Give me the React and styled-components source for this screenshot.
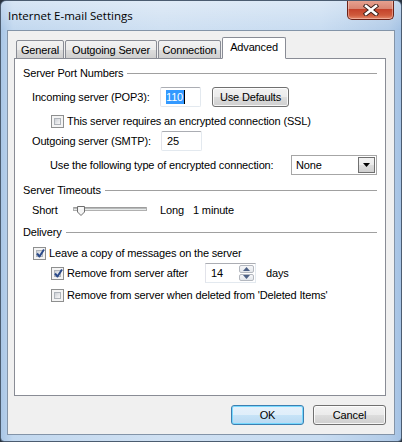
import React from 'react'
import styled, { createGlobalStyle } from 'styled-components'

const Global = createGlobalStyle`
  html, body { margin: 0; padding: 0; background: #2a3440; }
  body { font-family: Tahoma, "Liberation Sans", Arial, sans-serif; font-size: 11px; letter-spacing: -0.15px; color: #000; }
  * { box-sizing: border-box; }
`

const Window = styled.div`
  width: 402px;
  height: 442px;
  display: flex;
  flex-direction: column;
  border: 1px solid #4b5c70;
  border-radius: 6px 6px 4px 4px;
  background: linear-gradient(90deg, #a9c6e6 0%, #c2d8ef 3%, #cfe0f2 40%, #c8dcf1 80%, #b3cce8 97%, #a4c2e4 100%);
  overflow: hidden;
`

const TitleBar = styled.div`
  height: 29px;
  display: flex;
  align-items: flex-start;
  padding-left: 7px;
  background: linear-gradient(180deg, rgba(255,255,255,0.35) 0%, rgba(255,255,255,0) 100%);
`

const Title = styled.span`
  margin-top: 7px;
  font-family: "Open Sans", "Noto Sans", sans-serif;
  font-size: 11.5px;
  letter-spacing: 0;
  color: #000;
`

const CloseBtn = styled.div`
  margin-left: auto;
  margin-right: 7px;
  margin-top: -1px;
  width: 47px;
  height: 20px;
  display: flex;
  align-items: center;
  justify-content: center;
  border: 1px solid #6b2217;
  border-top: none;
  border-radius: 0 0 5px 5px;
  background: linear-gradient(180deg, #e8a493 0%, #d98673 45%, #c5432b 50%, #cf5a3c 80%, #e58a6c 100%);
  box-shadow: inset 0 0 0 1px rgba(255, 220, 210, 0.45);
`

const Client = styled.div`
  flex: 1;
  margin: 0 6px 6px 6px;
  border: 1px solid #8394a8;
  background: #f0f0f0;
  padding: 6px 8px 0 6px;
  display: flex;
  flex-direction: column;
`

const TabStrip = styled.div`
  display: flex;
  align-items: flex-end;
  height: 22px;
  padding-left: 2px;
  gap: 1px;
  margin-bottom: -1px;
  position: relative;
  z-index: 1;
`

const Tab = styled.div`
  width: ${({ $w }) => $w}px;
  height: ${({ $active }) => ($active ? 22 : 19)}px;
  display: flex;
  align-items: center;
  justify-content: center;
  white-space: nowrap;
  padding-bottom: ${({ $active }) => ($active ? 3 : 0)}px;
  border: 1px solid #898c95;
  border-bottom: ${({ $active }) => ($active ? '1px solid #fff' : '1px solid #898c95')};
  border-radius: 2px 2px 0 0;
  background: ${({ $active }) =>
    $active ? '#fff' : 'linear-gradient(180deg, #f2f2f2 0%, #ebebeb 50%, #dddddd 51%, #cfcfcf 100%)'};
  color: #000;
`

const Panel = styled.div`
  height: 338px;
  border: 1px solid #898c95;
  background: #fff;
  padding: 6px 8px 0 8px;
`

const Header = styled.div`
  display: flex;
  align-items: center;
  gap: 4px;
  height: 16px;
  margin-top: ${({ $top }) => $top || 0}px;
  &::after {
    content: '';
    flex: 1;
    height: 1px;
    background: #a0a0a0;
    box-shadow: 0 1px 0 #fff;
  }
`

const Row = styled.div`
  display: flex;
  align-items: center;
  height: ${({ $h }) => $h || 22}px;
  margin-top: ${({ $top }) => $top || 0}px;
  padding-left: ${({ $indent }) => $indent || 0}px;
`

const Label = styled.span`
  flex: none;
  width: ${({ $w }) => ($w ? `${$w}px` : 'auto')};
  margin-left: ${({ $ml }) => $ml || 0}px;
  white-space: nowrap;
`

const TextBox = styled.div`
  width: ${({ $w }) => $w || 41}px;
  height: 20px;
  display: flex;
  align-items: center;
  padding-left: 5px;
  border: 1px solid #abadb3;
  border-color: #abadb3 #e3e9ef #e3e9ef #e2e3ea;
  border-radius: 2px;
  background: #fff;
`

const Selected = styled.span`
  background: #3399ff;
  color: #fff;
  padding: 1px 1px 1px 0;
  border-right: 1px solid #000;
`

const Button = styled.div`
  width: ${({ $w }) => $w || 73}px;
  height: ${({ $h }) => $h || 20}px;
  margin-left: ${({ $ml }) => $ml || 0}px;
  display: flex;
  align-items: center;
  justify-content: center;
  border: 1px solid ${({ $default }) => ($default ? '#3c7fb1' : '#707070')};
  border-radius: 3px;
  background: ${({ $default }) =>
    $default
      ? 'linear-gradient(180deg, #e5f1fb 0%, #dfeefa 50%, #c6e3f7 51%, #b9d9f2 100%)'
      : 'linear-gradient(180deg, #f2f2f2 0%, #ebebeb 50%, #dddddd 51%, #cfcfcf 100%)'};
  box-shadow: inset 0 0 0 1px ${({ $default }) => ($default ? 'rgba(110, 215, 255, 0.9)' : 'rgba(255,255,255,0.8)')};
`

const CheckBoxBox = styled.div`
  flex: none;
  width: 13px;
  height: 13px;
  margin-right: 3px;
  border: 1px solid #8e8f8f;
  background: #f4f4f4;
  padding: 2px;
  display: flex;
`

const CheckInner = styled.div`
  flex: 1;
  border: 1px solid #aeb3b9;
  background: linear-gradient(135deg, #cbcfd5 0%, #e7e8ea 60%, #f6f6f6 100%);
  position: relative;
`

const Tick = styled.svg`
  position: absolute;
  left: -2px;
  top: -3px;
`

const Select = styled.div`
  width: 86px;
  height: 20px;
  display: flex;
  align-items: center;
  padding: 1px;
  padding-left: 4px;
  border: 1px solid #a6a6a6;
  background: #fff;
  color: #000;
`

const DropBtn = styled.div`
  margin-left: auto;
  width: 17px;
  height: 16px;
  display: flex;
  align-items: center;
  justify-content: center;
  border: 1px solid #707070;
  background: linear-gradient(180deg, #f2f2f2 0%, #ebebeb 50%, #dddddd 51%, #cfcfcf 100%);
`

const Spinner = styled.div`
  width: 51px;
  height: 20px;
  display: flex;
  border: 1px solid #abadb3;
  border-color: #abadb3 #e3e9ef #e3e9ef #e2e3ea;
  background: #fff;
`

const SpinText = styled.div`
  flex: 1;
  display: flex;
  align-items: center;
  padding-left: 5px;
`

const SpinBtns = styled.div`
  width: 16px;
  display: flex;
  flex-direction: column;
  gap: 1px;
  padding: 1px 1px 1px 0;
`

const SpinBtn = styled.div`
  flex: 1;
  display: flex;
  align-items: center;
  justify-content: center;
  border: 1px solid #b4b8bf;
  border-radius: 2px;
  background: linear-gradient(180deg, #f6f7f9 0%, #e4e7eb 100%);
`

const ButtonBar = styled.div`
  display: flex;
  justify-content: flex-end;
  gap: 9px;
  margin-top: 9px;
`

function CheckBox({ checked }) {
  return (
    <CheckBoxBox>
      <CheckInner>
        {checked && (
          <Tick width="11" height="11" viewBox="0 0 11 11">
            <path d="M2 5.5 L4.5 8.5 L9 1.5" fill="none" stroke="#2b4a8a" strokeWidth="2" strokeLinejoin="round" />
          </Tick>
        )}
      </CheckInner>
    </CheckBoxBox>
  )
}

function Slider() {
  return (
    <svg width="87" height="20" viewBox="0 0 87 20" style={{ flex: 'none' }}>
      <rect x="0.5" y="7.5" width="73" height="3" fill="#e7eaea" stroke="#b0b0b0" />
      <line x1="1" y1="8" x2="73" y2="8" stroke="#8a8a8a" />
      <path d="M4.5 6.5 H11.5 V12 L8 15.5 L4.5 12 Z" fill="#f4f4f4" stroke="#6e6e6e" />
      <line x1="6" y1="8" x2="10" y2="8" stroke="#fff" />
    </svg>
  )
}

export default function App() {
  return (
    <>
      <Global />
      <Window>
        <TitleBar>
          <Title>Internet E-mail Settings</Title>
          <CloseBtn>
            <svg width="16" height="12" viewBox="0 0 16 12">
              <path d="M3 2 L13 10 M13 2 L3 10" stroke="#3b1f1a" strokeWidth="4.4" strokeLinecap="square" />
              <path d="M3 2 L13 10 M13 2 L3 10" stroke="#fff" strokeWidth="2.6" strokeLinecap="square" />
            </svg>
          </CloseBtn>
        </TitleBar>
        <Client>
          <TabStrip>
            <Tab $w={48}>General</Tab>
            <Tab $w={92}>Outgoing Server</Tab>
            <Tab $w={63}>Connection</Tab>
            <Tab $w={64} $active>Advanced</Tab>
          </TabStrip>
          <Panel>
            <Header>Server Port Numbers</Header>
            <Row $top={5} $indent={9}>
              <Label $w={128}>Incoming server (POP3):</Label>
              <TextBox>
                <Selected>110</Selected>
              </TextBox>
              <Button $w={77} $ml={11}>Use Defaults</Button>
            </Row>
            <Row $top={5} $h={16} $indent={28}>
              <CheckBox />
              <Label>This server requires an encrypted connection (SSL)</Label>
            </Row>
            <Row $top={1} $indent={9}>
              <Label $w={129}>Outgoing server (SMTP):</Label>
              <TextBox>25</TextBox>
            </Row>
            <Row $top={2} $indent={27}>
              <Label $w={241}>Use the following type of encrypted connection:</Label>
              <Select>
                None
                <DropBtn>
                  <svg width="7" height="4" viewBox="0 0 7 4">
                    <path d="M0 0 H7 L3.5 4 Z" fill="#000" />
                  </svg>
                </DropBtn>
              </Select>
            </Row>
            <Header $top={6}>Server Timeouts</Header>
            <Row $top={2} $h={20} $indent={9}>
              <Label $w={41}>Short</Label>
              <Slider />
              <Label $w={33}>Long</Label>
              <Label>1 minute</Label>
            </Row>
            <Header $top={4}>Delivery</Header>
            <Row $top={5} $h={16} $indent={10}>
              <CheckBox checked />
              <Label>Leave a copy of messages on the server</Label>
            </Row>
            <Row $top={1} $indent={28}>
              <CheckBox checked />
              <Label $w={138}>Remove from server after</Label>
              <Spinner>
                <SpinText>14</SpinText>
                <SpinBtns>
                  <SpinBtn>
                    <svg width="7" height="4" viewBox="0 0 7 4">
                      <path d="M0 4 H7 L3.5 0 Z" fill="#4d6185" />
                    </svg>
                  </SpinBtn>
                  <SpinBtn>
                    <svg width="7" height="4" viewBox="0 0 7 4">
                      <path d="M0 0 H7 L3.5 4 Z" fill="#4d6185" />
                    </svg>
                  </SpinBtn>
                </SpinBtns>
              </Spinner>
              <Label $ml={10}>days</Label>
            </Row>
            <Row $top={3} $h={16} $indent={28}>
              <CheckBox />
              <Label>Remove from server when deleted from 'Deleted Items'</Label>
            </Row>
          </Panel>
          <ButtonBar>
            <Button $default>OK</Button>
            <Button>Cancel</Button>
          </ButtonBar>
        </Client>
      </Window>
    </>
  )
}
